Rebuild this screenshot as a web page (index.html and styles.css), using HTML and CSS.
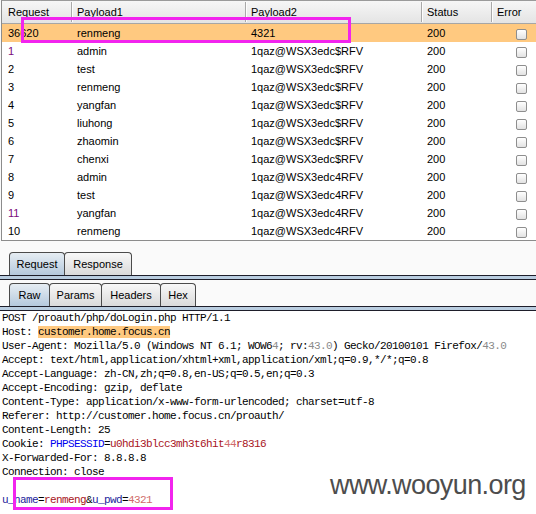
FILE: index.html
```html
<!DOCTYPE html>
<html>
<head>
<meta charset="utf-8">
<link rel="stylesheet" href="styles.css">
</head>
<body>
<div class="results">
  <div class="row head">
    <div class="c">Request</div><div class="c">Payload1</div><div class="c">Payload2</div><div class="c">Status</div><div class="c">Error</div>
  </div>
  <div class="row sel"><div class="c">36620</div><div class="c">renmeng</div><div class="c">4321</div><div class="c">200</div><div class="c"><span class="cb"></span></div></div>
  <div class="row"><div class="c pur">1</div><div class="c">admin</div><div class="c">1qaz@WSX3edc$RFV</div><div class="c">200</div><div class="c"><span class="cb"></span></div></div>
  <div class="row"><div class="c">2</div><div class="c">test</div><div class="c">1qaz@WSX3edc$RFV</div><div class="c">200</div><div class="c"><span class="cb"></span></div></div>
  <div class="row"><div class="c">3</div><div class="c">renmeng</div><div class="c">1qaz@WSX3edc$RFV</div><div class="c">200</div><div class="c"><span class="cb"></span></div></div>
  <div class="row"><div class="c">4</div><div class="c">yangfan</div><div class="c">1qaz@WSX3edc$RFV</div><div class="c">200</div><div class="c"><span class="cb"></span></div></div>
  <div class="row"><div class="c">5</div><div class="c">liuhong</div><div class="c">1qaz@WSX3edc$RFV</div><div class="c">200</div><div class="c"><span class="cb"></span></div></div>
  <div class="row"><div class="c">6</div><div class="c">zhaomin</div><div class="c">1qaz@WSX3edc$RFV</div><div class="c">200</div><div class="c"><span class="cb"></span></div></div>
  <div class="row"><div class="c">7</div><div class="c">chenxi</div><div class="c">1qaz@WSX3edc$RFV</div><div class="c">200</div><div class="c"><span class="cb"></span></div></div>
  <div class="row"><div class="c">8</div><div class="c">admin</div><div class="c">1qaz@WSX3edc4RFV</div><div class="c">200</div><div class="c"><span class="cb"></span></div></div>
  <div class="row"><div class="c">9</div><div class="c">test</div><div class="c">1qaz@WSX3edc4RFV</div><div class="c">200</div><div class="c"><span class="cb"></span></div></div>
  <div class="row"><div class="c pur">11</div><div class="c">yangfan</div><div class="c">1qaz@WSX3edc4RFV</div><div class="c">200</div><div class="c"><span class="cb"></span></div></div>
  <div class="row"><div class="c">10</div><div class="c">renmeng</div><div class="c">1qaz@WSX3edc4RFV</div><div class="c">200</div><div class="c"><span class="cb"></span></div></div>
</div>

<div class="tabzone">
  <div class="tabs">
    <div class="tab on t-req">Request</div><div class="tab t-resp">Response</div>
  </div>
  <div class="strip"></div>
  <div class="tabs second">
    <div class="tab on t-raw">Raw</div><div class="tab t-params">Params</div><div class="tab t-headers">Headers</div><div class="tab t-hex">Hex</div>
  </div>
  <div class="strip"></div>
</div>

<div class="editor"><div class="ln">POST /proauth/php/doLogin.php HTTP/1.1</div><div class="ln">Host: <span class="hl">customer.home.focus.cn</span></div><div class="ln">User-Agent: Mozilla/5.0 (Windows NT 6.1; WOW6<span class="g">4</span>; rv:<span class="g">43.0</span>) Gecko/20100101 Firefox/<span class="g">43.0</span></div><div class="ln">Accept: text/html,application/xhtml+xml,application/xml;q=0.9,*/*;q=0.8</div><div class="ln">Accept-Language: zh-CN,zh;q=0.8,en-US;q=0.5,en;q=0.3</div><div class="ln">Accept-Encoding: gzip, deflate</div><div class="ln">Content-Type: application/x-www-form-urlencoded; charset=utf-8</div><div class="ln">Referer: http://customer.home.focus.cn/proauth/</div><div class="ln">Content-Length: 25</div><div class="ln">Cookie: <span class="pn">PHPSESSID</span>=<span class="pv">u0hdi3blcc3mh3t6hit<span class="pvl">44</span>r8316</span></div><div class="ln">X-Forwarded-For: 8.8.8.8</div><div class="ln">Connection: close</div><div class="ln"> </div><div class="ln"><span class="bn">u_name</span>=<span class="pv">renmeng</span>&amp;<span class="bn">u_pwd</span>=<span class="pvl">4321</span></div></div>

<div class="mark box1"></div>
<div class="mark box2"></div>
<div class="watermark">www.wooyun.org</div>
</body>
</html>
```

FILE: styles.css
```css
html, body {
  margin: 0;
  padding: 0;
}
body {
  background: #fafafa;
  height: 100vh;
  display: flex;
  flex-direction: column;
  overflow: hidden;
  font-family: "Liberation Sans", Arial, sans-serif;
  font-size: 11px;
  color: #000;
}
.results {
  margin-left: 1px;
  border-left: 1px solid #8c8c8c;
  border-top: 1px solid #9a9a9a;
  border-bottom: 1px solid #8c8c8c;
  background: #fff;
}
.row {
  display: grid;
  grid-template-columns: 70px 174px 176px 70px 1fr;
  height: 18px;
  align-items: center;
}
.row .c {
  padding-left: 5px;
  white-space: nowrap;
  overflow: hidden;
}
.row .c:first-child {
  padding-left: 6px;
}
.head {
  height: 22px;
  align-items: stretch;
  background: linear-gradient(#f6f6f6, #e4e4e4);
  border-bottom: 1px solid #a6a6a6;
}
.head .c {
  line-height: 20px;
  margin: 1px 0;
  border-right: 1px solid #a9a9a9;
  box-shadow: 1px 0 0 #fdfdfd;
}
.head .c:last-child {
  border-right: none;
  box-shadow: none;
}
.sel {
  background: #ffc980;
}
.pur {
  color: #7a0a7a;
}
.cb {
  display: inline-block;
  width: 9px;
  height: 9px;
  margin-left: 19px;
  margin-top: 2px;
  border: 1px solid #8e8e8e;
  border-radius: 2px;
  background: linear-gradient(#ffffff, #e2e2e2);
  vertical-align: middle;
}
.tabzone {
  padding-top: 11px;
}
.tabs {
  display: flex;
  padding-left: 9px;
  height: 23px;
}
.tabs.second {
  margin-top: 3px;
}
.tab {
  box-sizing: border-box;
  height: 23px;
  line-height: 22px;
  text-align: center;
  border: 1px solid #4b4b4b;
  border-bottom: none;
  border-radius: 4px 4px 0 0;
  background: linear-gradient(#f8f8f8, #dadada);
  margin-right: -1px;
  font-size: 11px;
  white-space: nowrap;
}
.t-req { width: 56px; }
.t-resp { width: 68px; }
.t-raw { width: 41px; }
.t-params { width: 53px; }
.t-headers { width: 60px; }
.t-hex { width: 36px; }
.tab.on {
  background: linear-gradient(#e6edf3, #b5c9dd);
}
.strip {
  height: 3px;
  background: #b9cde0;
  border-top: 1px solid #1e1e2a;
  border-bottom: 1px solid #1e1e2a;
}
.editor {
  flex: 1;
  background: #fff;
  padding: 0 2px;
  font-family: "Liberation Mono", "DejaVu Sans Mono", monospace;
  font-size: 11px;
  letter-spacing: -0.6px;
  line-height: 14px;
  white-space: pre;
  overflow: hidden;
}
.ln {
  height: 14px;
}
.hl {
  background: #ffc980;
}
.g {
  color: #8a8a8a;
}
.pn {
  color: #0000f0;
}
.bn {
  color: #1c1c9c;
}
.pv {
  color: #a8141c;
}
.pvl {
  color: #d06a6a;
}
.mark {
  position: absolute;
  border: 3px solid #f224ee;
  box-sizing: border-box;
}
.box1 {
  left: 21px;
  top: 17px;
  width: 330px;
  height: 26px;
}
.box2 {
  left: 13px;
  top: 477px;
  width: 160px;
  height: 33px;
}
.watermark {
  position: absolute;
  left: 330px;
  top: 472px;
  font-family: "Liberation Sans", Arial, sans-serif;
  font-size: 27px;
  line-height: 27px;
  letter-spacing: -0.6px;
  color: #4d4d4d;
}
```
